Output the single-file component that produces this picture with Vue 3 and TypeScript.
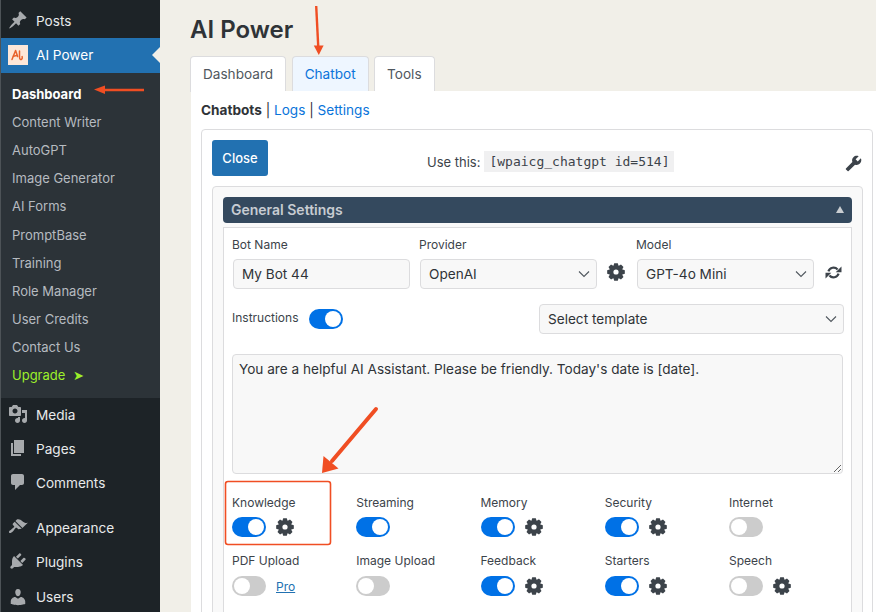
<script setup lang="ts">
interface NavItem {
  label: string;
  icon: string;
}

interface Feature {
  label: string;
  on: boolean;
  gear?: boolean;
  pro?: boolean;
}

const icons: Record<string, string> = {
  pin: "M10.44 3.02l1.82-1.82 6.36 6.35-1.83 1.82c-1.05-.68-2.48-.57-3.41.36l-.75.75c-.92.93-1.04 2.35-.35 3.41l-1.83 1.82-2.41-2.41-2.8 2.79c-.42.42-3.38 2.71-3.8 2.29s1.86-3.39 2.28-3.81l2.79-2.79L4.1 9.36l1.83-1.82c1.05.69 2.48.57 3.4-.36l.75-.75c.93-.92 1.05-2.35.36-3.41z",
  media: "M13 11V4c0-.55-.45-1-1-1h-1.67L9 1H5L3.67 3H2c-.55 0-1 .45-1 1v7c0 .55.45 1 1 1h10c.55 0 1-.45 1-1zM7 4.5c1.38 0 2.5 1.12 2.5 2.5S8.38 9.5 7 9.5 4.5 8.38 4.5 7 5.62 4.5 7 4.5zM14 6h5v10.5c0 1.38-1.12 2.5-2.5 2.5S14 17.88 14 16.5s1.12-2.5 2.5-2.5c.17 0 .34.02.5.05V9h-3V6zm-4 8.05V13h2v3.5c0 1.38-1.12 2.5-2.5 2.5S7 17.88 7 16.5 8.12 14 9.5 14c.17 0 .34.02.5.05z",
  pages: "M6 15V2h10v13H6zm-1 1h8v2H3V5h2v11z",
  comments: "M5 2h9c1.1 0 2 .9 2 2v7c0 1.1-.9 2-2 2h-2l-5 5v-5H5c-1.1 0-2-.9-2-2V4c0-1.1.9-2 2-2z",
  brush: "M14.48 11.06L7.41 3.99l1.5-1.5c.5-.56 2.3-.47 3.51.32 1.21.8 1.43 1.28 2.91 2.1 1.18.64 2.45 1.26 4.45.85zm-.71.71L6.7 4.7 4.93 6.47c-.39.39-.39 1.02 0 1.41l1.06 1.06c.39.39.39 1.03 0 1.42-.6.6-1.43 1.11-2.21 1.69-.35.26-.7.53-1.01.84C1.43 13.23.4 14.91 1.2 15.7c.79.8 2.52-.2 3.86-1.54.3-.3.57-.66.84-1.01.58-.78 1.1-1.61 1.69-2.21.39-.39 1.02-.39 1.41 0l1.06 1.06c.39.39 1.02.39 1.41 0z",
  plugin: "M13.11 4.36L9.87 7.6 8 5.73l3.24-3.24c.35-.34 1.05-.2 1.56.32.52.51.66 1.21.31 1.55zm-8 1.77l.91-1.12 9.01 9.01-1.19.84c-.71.71-2.63 1.16-3.82 1.16H6.14L4.9 17.26c-.59.59-1.54.59-2.12 0-.59-.58-.59-1.53 0-2.12l1.24-1.24v-3.88c0-1.13.4-3.19 1.09-3.89zm7.26 3.97l3.24-3.24c.34-.35 1.04-.21 1.55.31.52.51.66 1.21.31 1.55l-3.24 3.25z",
  users: "M10 9.25c-2.27 0-2.73-3.44-2.73-3.44C7 4.02 7.82 2 9.97 2c2.16 0 2.98 2.02 2.71 3.81 0 0-.41 3.44-2.68 3.44zm0 2.57L12.72 10c2.39 0 4.52 2.33 4.52 4.53v2.49s-3.65 1.13-7.24 1.13c-3.65 0-7.24-1.13-7.24-1.13v-2.49c0-2.25 1.94-4.48 4.47-4.48z",
};

const subItems = [
  "Content Writer",
  "AutoGPT",
  "Image Generator",
  "AI Forms",
  "PromptBase",
  "Training",
  "Role Manager",
  "User Credits",
  "Contact Us",
];

const navGroupA: NavItem[] = [
  { label: "Media", icon: icons.media },
  { label: "Pages", icon: icons.pages },
  { label: "Comments", icon: icons.comments },
];

const navGroupB: NavItem[] = [
  { label: "Appearance", icon: icons.brush },
  { label: "Plugins", icon: icons.plugin },
  { label: "Users", icon: icons.users },
];

const features: Feature[] = [
  { label: "Knowledge", on: true, gear: true },
  { label: "Streaming", on: true },
  { label: "Memory", on: true, gear: true },
  { label: "Security", on: true, gear: true },
  { label: "Internet", on: false },
  { label: "PDF Upload", on: false, pro: true },
  { label: "Image Upload", on: false },
  { label: "Feedback", on: true, gear: true },
  { label: "Starters", on: true, gear: true },
  { label: "Speech", on: false, gear: true },
];

// eight tooth cog, drawn once and reused
const gearPath = (() => {
  const teeth = 8;
  const pts: string[] = [];
  for (let i = 0; i < teeth; i++) {
    const a = (i / teeth) * Math.PI * 2;
    const w = 0.27;
    const spots: [number, number][] = [
      [a - w - 0.1, 7.6],
      [a - w + 0.07, 10],
      [a + w - 0.07, 10],
      [a + w + 0.1, 7.6],
    ];
    for (const [ang, r] of spots) {
      pts.push(`${(10 + r * Math.sin(ang)).toFixed(2)} ${(10 - r * Math.cos(ang)).toFixed(2)}`);
    }
  }
  const hole = "M10 7.1a2.9 2.9 0 1 0 0 5.8a2.9 2.9 0 1 0 0-5.8z";
  return `M${pts.join("L")}Z${hole}`;
})();
</script>

<template>
  <div class="page">
    <aside class="sidebar">
      <a class="nav-row">
        <svg class="nav-icon" viewBox="0 0 20 20"><path :d="icons.pin" /></svg>
        <span>Posts</span>
      </a>
      <a class="nav-row active">
        <span class="logo">
          <svg viewBox="0 0 20 20" width="20" height="20" fill="none" stroke="#e8622c" stroke-width="1.5" stroke-linecap="round" stroke-linejoin="round">
            <path d="M4 14.5L7.6 5.5L9.6 11.5" />
            <path d="M5.4 11.2C7 10.6 8 10.4 9.4 10.4" />
            <path d="M11.5 6v6c0 2.6 1.4 3 2.2 2.2c.8-.8.6-2 .4-2.6" />
          </svg>
        </span>
        <span>AI Power</span>
        <i class="notch"></i>
      </a>
      <div class="submenu">
        <a class="sub-row current">Dashboard</a>
        <a v-for="item in subItems" :key="item" class="sub-row">{{ item }}</a>
        <a class="sub-row upgrade">Upgrade<span class="upgrade-arrow">➤</span></a>
      </div>
      <div class="nav-group">
        <a v-for="item in navGroupA" :key="item.label" class="nav-row">
          <svg class="nav-icon" viewBox="0 0 20 20"><path :d="item.icon" /></svg>
          <span>{{ item.label }}</span>
        </a>
      </div>
      <div class="nav-group second">
        <a v-for="item in navGroupB" :key="item.label" class="nav-row">
          <svg class="nav-icon" viewBox="0 0 20 20"><path :d="item.icon" /></svg>
          <span>{{ item.label }}</span>
        </a>
      </div>
    </aside>

    <main class="main">
      <h1>AI Power</h1>
      <div class="tabs">
        <a class="tab">Dashboard</a>
        <a class="tab selected">Chatbot</a>
        <a class="tab">Tools</a>
      </div>
      <div class="panel">
        <div class="crumbs"><b>Chatbots</b> | <a>Logs</a> | <a>Settings</a></div>
        <div class="card">
          <div class="card-top">
            <button class="close-btn">Close</button>
            <div class="shortcode">
              <span>Use this:</span>
              <code>[wpaicg_chatgpt id=514]</code>
            </div>
            <svg class="wrench" viewBox="0 0 24 24"><path transform="matrix(-1 0 0 1 24 0)" d="M22.7 19l-9.1-9.1c.9-2.3.4-5-1.5-6.9-2-2-5-2.4-7.4-1.3L9 6 6 9 1.6 4.7C.4 7.1.9 10.1 2.9 12.1c1.9 1.9 4.6 2.4 6.9 1.5l9.1 9.1c.4.4 1 .4 1.4 0l2.3-2.3c.5-.4.5-1.1.1-1.4z" /></svg>
          </div>
          <div class="settings">
            <div class="settings-head">
              <span>General Settings</span>
              <i class="caret"></i>
            </div>
            <div class="settings-body">
              <div class="field-row">
                <label class="field name">
                  <span>Bot Name</span>
                  <input class="control" value="My Bot 44" />
                </label>
                <label class="field">
                  <span>Provider</span>
                  <span class="select-wrap">
                    <select class="control"><option>OpenAI</option></select>
                    <svg class="chevron" viewBox="0 0 12 8"><path d="M1 1.5l5 5 5-5" /></svg>
                  </span>
                </label>
                <svg class="gear big" viewBox="0 0 20 20"><path :d="gearPath" fill-rule="evenodd" /></svg>
                <label class="field model">
                  <span>Model</span>
                  <span class="select-wrap">
                    <select class="control"><option>GPT-4o Mini</option></select>
                    <svg class="chevron" viewBox="0 0 12 8"><path d="M1 1.5l5 5 5-5" /></svg>
                  </span>
                </label>
                <svg class="sync" viewBox="0 0 20 20">
                  <path d="M4 8.6A6.4 6.4 0 0 1 14.8 6.4M16 11.4A6.4 6.4 0 0 1 5.2 13.6" fill="none" stroke="#3c434a" stroke-width="2.6" />
                  <path d="M12.6 9.6H19.4V2.8zM7.4 10.4H.6V17.2z" />
                </svg>
              </div>
              <div class="instr-row">
                <span class="label">Instructions</span>
                <span class="toggle on"></span>
                <span class="select-wrap template">
                  <select class="control"><option>Select template</option></select>
                  <svg class="chevron" viewBox="0 0 12 8"><path d="M1 1.5l5 5 5-5" /></svg>
                </span>
              </div>
              <textarea class="prompt" readonly>You are a helpful AI Assistant. Please be friendly. Today's date is [date].</textarea>
              <div class="features">
                <div v-for="f in features" :key="f.label" class="feature">
                  <span class="label">{{ f.label }}</span>
                  <div class="feature-controls">
                    <span class="toggle" :class="{ on: f.on }"></span>
                    <svg v-if="f.gear" class="gear" viewBox="0 0 20 20"><path :d="gearPath" fill-rule="evenodd" /></svg>
                    <a v-if="f.pro" class="pro">Pro</a>
                  </div>
                </div>
              </div>
            </div>
          </div>
        </div>
      </div>
    </main>

    <!-- annotations pasted over the screenshot -->
    <svg class="marks" viewBox="0 0 876 612" width="876" height="612">
      <path d="M144 90H104" stroke="#f04e23" stroke-width="2.4" />
      <path d="M94 89.6L105 85.5V94z" fill="#f04e23" />
      <path d="M316.2 6L318.2 46" stroke="#f04e23" stroke-width="2.4" />
      <path d="M318.8 55L313.8 45.5H323.6z" fill="#f04e23" />
      <path d="M376 409L332 461" stroke="#f04e23" stroke-width="4" stroke-linecap="round" />
      <path d="M322 473L323.5 456L338.5 468.5z" fill="#f04e23" />
      <rect x="225.5" y="481.5" width="105" height="63" rx="2.5" fill="none" stroke="#f04e23" stroke-width="1.6" />
    </svg>
  </div>
</template>

<style>
html,
body {
  margin: 0;
  background: #f1efe8;
}
</style>

<style scoped>
.page {
  position: relative;
  display: flex;
  width: 876px;
  height: 612px;
  overflow: hidden;
  background: #f1efe8;
  font-family: Inter, "Liberation Sans", sans-serif;
  color: #3c434a;
}

.sidebar {
  flex: 0 0 160px;
  box-sizing: border-box;
  padding-top: 4px;
  background: #1d2327;
  border-left: 1px solid #4d5357;
  font-size: 13.6px;
}

.nav-row {
  position: relative;
  display: flex;
  align-items: center;
  gap: 8px;
  box-sizing: border-box;
  height: 34px;
  padding: 0 0 2px 7px;
  color: #e8eaeb;
}

.nav-row:not(.active) > span {
  margin-top: 2px;
}

.nav-row.active {
  height: 35px;
  background: #2271b1;
  color: #fff;
}

.nav-group.second .nav-row:last-child {
  padding: 1px 0 0 7px;
}

.nav-group.second .nav-row:last-child > span {
  margin-top: 0;
}

.nav-icon {
  flex: none;
  width: 20px;
  height: 20px;
  fill: #a7aaad;
}

.logo {
  flex: none;
  display: flex;
  width: 20px;
  height: 20px;
  background: #fde7d8;
}

.notch {
  position: absolute;
  right: 0;
  top: 9px;
  border: 8px solid transparent;
  border-right-color: #f1efe8;
  border-left-width: 0;
}

.submenu {
  box-sizing: border-box;
  height: 325px;
  padding: 7px 0 0 11px;
  background: #2c3338;
  font-size: 13px;
}

.sub-row {
  display: block;
  height: 28.12px;
  line-height: 28px;
  color: #b6bbc0;
}

.sub-row.current {
  color: #fff;
  font-weight: 700;
}

.sub-row.upgrade {
  color: #9cf02a;
}

.upgrade-arrow {
  margin-left: 8px;
}

.nav-group.second {
  padding-top: 11px;
}

.main {
  flex: 1;
  min-width: 0;
  padding-left: 30px;
}

h1 {
  margin: 0;
  height: 56px;
  font-size: 24px;
  font-weight: 600;
  line-height: 60px;
  color: #2f3337;
}

.tabs {
  display: flex;
  gap: 5.5px;
  height: 35px;
}

.tab {
  box-sizing: border-box;
  height: 36px;
  padding: 0 12px;
  background: #fff;
  border: 1px solid #dcdcde;
  border-bottom: 0;
  border-radius: 4px 4px 0 0;
  font-size: 13.6px;
  line-height: 34px;
  color: #50575e;
}

.tab.selected {
  background: #eef6ff;
  color: #0a74da;
}

.panel {
  position: relative;
  box-sizing: border-box;
  height: 525px;
  padding: 10px;
  margin-left: 1px;
  background: #fff;
}

.crumbs {
  height: 28px;
  font-size: 13.6px;
  line-height: 18px;
  color: #2f3337;
}

.crumbs b {
  font-weight: 700;
}

.crumbs a {
  color: #0a74da;
}

.card {
  box-sizing: border-box;
  width: 672px;
  height: 500px;
  padding: 10px;
  background: #fff;
  border: 1px solid #dcdcde;
  border-radius: 4px;
}

.card-top {
  display: flex;
  height: 46px;
}

.close-btn {
  width: 56px;
  height: 36px;
  padding: 0;
  background: #2271b1;
  border: 0;
  border-radius: 3px;
  color: #fff;
  font: 500 13px Inter, sans-serif;
}

.shortcode {
  display: flex;
  align-items: center;
  gap: 4px;
  height: 21px;
  margin: 11px 0 0 159px;
  font-size: 13px;
}

.shortcode code {
  padding: 0 5px;
  height: 21px;
  line-height: 21px;
  background: #f0f0f1;
  font-family: "DejaVu Sans Mono", monospace;
  font-size: 13px;
}

.wrench {
  width: 17px;
  height: 17px;
  margin: 15px 0 0 auto;
  fill: #3c434a;
}

.settings {
  box-sizing: border-box;
  width: 651px;
  height: 450px;
  padding: 10px;
  background: #f9f9f9;
  border: 1px solid #dcdcde;
  border-radius: 4px;
}

.settings-head {
  display: flex;
  align-items: center;
  justify-content: space-between;
  box-sizing: border-box;
  height: 26px;
  padding: 0 8px 2px;
  background: #34495e;
  border-radius: 4px;
  color: #c7ccd2;
  font-size: 14px;
  font-weight: 600;
}

.caret {
  border: 4px solid transparent;
  border-top: 0;
  border-bottom: 7px solid #c9cdd1;
}

.settings-body {
  box-sizing: border-box;
  width: 629px;
  height: 400px;
  margin-top: 4px;
  padding: 10px 8px;
  background: #fff;
  border: 1px solid #dcdcde;
}

.field-row {
  display: flex;
  align-items: flex-end;
  height: 51px;
}

.field {
  display: flex;
  flex-direction: column;
  gap: 7px;
  width: 178px;
  font-size: 12px;
}

.field.name {
  margin-right: 9px;
}

.field.model {
  margin-left: 11px;
}

.field .control,
.field .select-wrap {
  margin-left: 1px;
  width: 177px;
}

.field .select-wrap .control {
  margin-left: 0;
}

.control {
  box-sizing: border-box;
  width: 100%;
  height: 30px;
  padding: 0 8px;
  background: #f8f8f8;
  border: 1px solid #dcdcde;
  border-radius: 4px;
  color: #2f3337;
  font: 13.6px Inter, sans-serif;
  appearance: none;
  outline: none;
}

.select-wrap {
  position: relative;
  display: block;
}

.chevron {
  position: absolute;
  right: 7px;
  top: 11px;
  width: 12px;
  height: 8px;
  fill: none;
  stroke: #50575e;
  stroke-width: 1.1;
}

.gear {
  flex: none;
  width: 18px;
  height: 18px;
  fill: #3c434a;
}

.gear.big {
  margin: 0 0 8px 10px;
}

.sync {
  flex: none;
  width: 17px;
  height: 17px;
  margin: 0 0 8px 11px;
  fill: #3c434a;
}

.instr-row {
  display: flex;
  align-items: center;
  height: 30px;
  margin-top: 15px;
}

.label {
  font-size: 12px;
  color: #3c434a;
}

.instr-row .label {
  margin-bottom: 4px;
}

.instr-row .toggle {
  margin-left: 10px;
}

.template {
  width: 305px;
  margin-left: auto;
  margin-right: -1px;
}

.prompt {
  display: block;
  box-sizing: border-box;
  width: 611px;
  height: 120px;
  margin-top: 20px;
  padding: 6px;
  background: #f8f8f8;
  border: 1px solid #dcdcde;
  border-radius: 4px;
  color: #2f3337;
  font: 13.6px Inter, sans-serif;
  outline: none;
}

.features {
  display: grid;
  grid-template-columns: repeat(5, 124.25px);
  grid-auto-rows: 58px;
  margin-top: 22px;
}

.feature {
  display: flex;
  flex-direction: column;
  gap: 7px;
}

.feature:nth-child(n + 6) .feature-controls {
  margin-top: 1px;
}

.feature .label {
  line-height: 14px;
}

.feature-controls {
  display: flex;
  align-items: center;
  gap: 10px;
}

.toggle {
  position: relative;
  flex: none;
  display: block;
  box-sizing: border-box;
  width: 34px;
  height: 20px;
  background: #ccc;
  border-radius: 10px;
}

.toggle::after {
  content: "";
  position: absolute;
  left: 2px;
  top: 2px;
  width: 16px;
  height: 16px;
  background: #fff;
  border-radius: 50%;
}

.toggle.on {
  background: #0071e6;
}

.toggle.on::after {
  left: 16px;
}

.pro {
  color: #2271b1;
  font-size: 12px;
  text-decoration: underline;
}

.marks {
  position: absolute;
  left: 0;
  top: 0;
  pointer-events: none;
}
</style>
